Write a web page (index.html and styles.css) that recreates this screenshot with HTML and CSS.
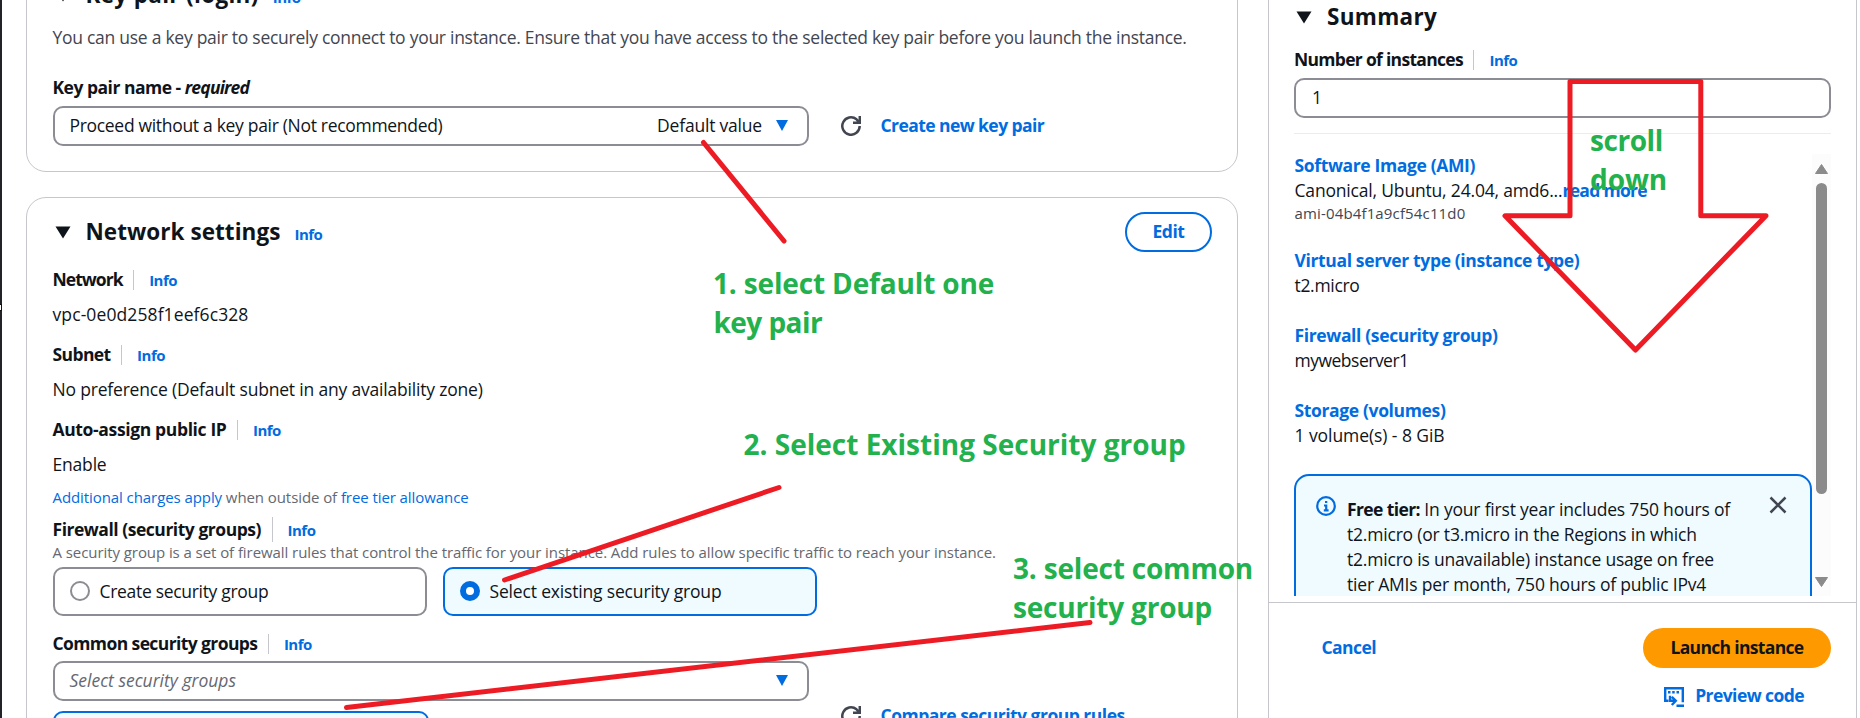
FILE: index.html
```html
<!DOCTYPE html>
<html lang="en">
<head>
<meta charset="utf-8">
<title>Launch an instance</title>
<link rel="stylesheet" href="styles.css">
</head>
<body>
<div class="page">
  <div class="rail"><span class="rail-handle"></span></div>

  <main class="main">
    <section class="card card-key">
      <div class="card-head"><svg class="tri" viewBox="0 0 16 13"><path d="M.5.5h15L8 12.500z"/></svg><h2 class="w-key">Key pair (login)</h2><a class="info">Info</a></div>
      <p class="desc">You can use a key pair to securely connect to your instance. Ensure that you have access to the selected key pair before you launch the instance.</p>
      <div class="label key-label"><span>Key pair name -&nbsp;</span><em>required</em></div>
      <div class="field-row">
        <div class="select"><span class="w-select">Proceed without a key pair (Not recommended)</span><span class="select-meta">Default value</span><svg class="caret" viewBox="0 0 12 11"><path d="M0 0h12L6 11z"/></svg></div>
        <svg class="refresh" viewBox="0 0 20 20"><path d="M18.700 10A8.700 8.700 0 1 1 15.500 3.300L18 6.300M18.800 0v6.800h-6.800"/></svg>
        <a class="link-bold">Create new key pair</a>
      </div>
    </section>

    <section class="card card-net">
      <div class="card-head net-head"><svg class="tri" viewBox="0 0 16 13"><path d="M.5.5h15L8 12.500z"/></svg><h2>Network settings</h2><a class="info">Info</a><button class="btn-edit">Edit</button></div>

      <div class="label"><span class="w-network">Network</span><i class="bar"></i><a class="info">Info</a></div>
      <p class="value w-id">vpc-0e0d258f1eef6c328</p>
      <div class="label"><span>Subnet</span><i class="bar"></i><a class="info">Info</a></div>
      <p class="value">No preference (Default subnet in any availability zone)</p>
      <div class="label"><span class="w-loose">Auto-assign public IP</span><i class="bar"></i><a class="info">Info</a></div>
      <p class="value last">Enable</p>
      <p class="hint charges"><a>Additional charges apply</a> when outside of <a>free tier allowance</a></p>

      <div class="label firewall"><span class="w-firewall">Firewall (security groups)</span><i class="bar tall"></i><a class="info">Info</a></div>
      <p class="hint w-hint">A security group is a set of firewall rules that control the traffic for your instance. Add rules to allow specific traffic to reach your instance.</p>
      <div class="tiles">
        <div class="tile"><span class="radio"></span><span class="w-select">Create security group</span></div>
        <div class="tile on"><span class="radio"></span><span>Select existing security group</span></div>
      </div>

      <div class="label common"><span class="w-tight">Common security groups</span><i class="bar"></i><a class="info">Info</a></div>
      <div class="field-row groups">
        <div class="group-col">
          <div class="select"><em class="placeholder">Select security groups</em><svg class="caret" viewBox="0 0 12 11"><path d="M0 0h12L6 11z"/></svg></div>
          <div class="token"></div>
        </div>
        <div class="compare">
          <svg class="refresh" viewBox="0 0 20 20"><path d="M18.700 10A8.700 8.700 0 1 1 15.500 3.300L18 6.300M18.800 0v6.800h-6.800"/></svg>
          <a class="link-bold w-compare">Compare security group rules</a>
        </div>
      </div>
    </section>
  </main>

  <aside class="summary">
    <div class="summary-body">
      <div class="card-head sum-head"><svg class="tri" viewBox="0 0 16 13"><path d="M.5.5h15L8 12.500z"/></svg><h2 class="w-summary">Summary</h2></div>
      <div class="label"><span class="w-number">Number of instances</span><i class="bar"></i><a class="info">Info</a></div>
      <div class="input">1</div>
      <hr class="rule">
      <div class="scroller">
        <div class="scroll-content">
          <dl>
            <dt class="w-loose">Software Image (AMI)</dt>
            <dd>Canonical, Ubuntu, 24.04, amd6...<b class="more">read more</b></dd>
            <dd class="ami">ami-04b4f1a9cf54c11d0</dd>
            <dt class="w-loose">Virtual server type (instance type)</dt>
            <dd class="w-select">t2.micro</dd>
            <dt class="w-loose">Firewall (security group)</dt>
            <dd class="w-mono">mywebserver1</dd>
            <dt class="w-loose">Storage (volumes)</dt>
            <dd class="w-vol">1 volume(s) - 8 GiB</dd>
          </dl>
          <div class="alert">
            <svg class="alert-icon" viewBox="0 0 20 20"><circle cx="10" cy="10" r="8.800"/><path d="M9 6h2.300M8 9.500h2.200v5M7.800 14.300h4.800"/></svg>
            <p><b>Free tier:</b> In your first year includes 750 hours of<br>t2.micro (or t3.micro in the Regions in which<br>t2.micro is unavailable) instance usage on free<br>tier AMIs per month, 750 hours of public IPv4</p>
            <svg class="close" viewBox="0 0 18 18"><path d="M1.500 1.500l15 15M16.500 1.500l-15 15"/></svg>
          </div>
        </div>
        <div class="track">
          <svg viewBox="0 0 13 10"><path d="M6.500.5L12.500 9.500H.5z"/></svg>
          <span class="thumb"></span>
          <svg class="down" viewBox="0 0 13 10"><path d="M6.500 9.500L12.500.5H.5z"/></svg>
        </div>
      </div>
    </div>
    <footer class="actions">
      <div class="action-row"><a class="link-bold cancel">Cancel</a><button class="btn-launch">Launch instance</button></div>
      <div class="preview">
        <svg viewBox="0 0 20 20"><path d="M4.500 13.700H1.200V1.200h17.600v14"/><path d="M4 5.200h2.500M8.200 5.200h2.500M12.500 5.200h2.500"/><path d="M6 8.800v4.900h5M7.800 9.800l4 3.900-4 4.300M12.500 18.800H20"/></svg>
        <a class="link-bold">Preview code</a>
      </div>
    </footer>
  </aside>

  <svg class="notes" viewBox="0 0 1860 718">
    <g class="strokes">
      <path d="M703.500 142.500L784 241"/>
      <path d="M504.500 580L779 487.500"/>
      <path d="M346.500 707.500L1090 622.500"/>
      <path class="arrow" d="M1570 81.500H1700.800V215.700H1766L1635.500 350 1505 215.700H1570z"/>
    </g>
    <g class="captions">
      <text x="713" y="294" textLength="281">1. select Default one</text>
      <text x="713.500" y="333" textLength="109">key pair</text>
      <text x="743.500" y="455" textLength="442">2. Select Existing Security group</text>
      <text x="1013" y="579" textLength="240">3. select common</text>
      <text x="1013" y="618" textLength="199">security group</text>
      <text x="1590" y="151" textLength="73">scroll</text>
      <text x="1590" y="190" textLength="77">down</text>
    </g>
  </svg>
</div>
</body>
</html>
```
FILE: styles.css
```css
* { box-sizing: border-box; }
body {
  margin: 0;
  height: 718px;
  overflow: hidden;
  background: #fff;
  color: #0f141a;
  font: 17.5px/25px "Open Sans", "Noto Sans", sans-serif;
  letter-spacing: -0.23px;
}
h2, p, dl, dd { margin: 0; }
a { color: #006ce0; }
.page { position: relative; display: flex; height: 718px; overflow: hidden; }

.rail { width: 2px; flex: none; background: #222327; padding-top: 304px; }
.rail-handle { display: block; height: 7px; background: #fff; border: 1px solid #111; border-left: 0; }

/* left column */
.main { width: 1212px; margin-left: 24px; flex: none; }
.card { border: 1px solid #c6c6cd; border-radius: 20px; padding: 0 25px 0 25.500px; background: #fff; }
.card-key { margin-top: -45px; padding-top: 24px; padding-bottom: 25px; }
.card-net { margin-top: 25px; padding-top: 14px; height: 640px; }
.card-head { display: flex; align-items: center; height: 30px; }
.net-head { height: 40px; margin-bottom: 15px; }
h2 { font-size: 22.5px; line-height: 30px; font-weight: 700; letter-spacing: 0.05px; }
.tri { width: 16px; height: 13px; margin: 0 15px 0 2px; fill: #0f141a; }
.info { font-size: 15px; line-height: 25px; font-weight: 700; letter-spacing: -0.5px; }
.card-head .info { margin-left: 14px; padding-top: 5px; }
.desc { margin-top: 15px; color: #424650; letter-spacing: -0.27px; }
.label { display: flex; align-items: center; height: 25px; font-weight: 700; letter-spacing: -0.6px; }
.label .info { padding-top: 1px; }
.key-label { margin-top: 25px; margin-bottom: 6px; letter-spacing: -0.5px; }
.key-label em { letter-spacing: -0.8px; }
.bar { width: 1px; height: 20px; background: #c6c6cd; margin: 0 15px 0 10.500px; }
.bar.tall { height: 25px; }
.field-row { display: flex; align-items: center; }
.select {
  display: flex; align-items: center; width: 756px; height: 40px; flex: none;
  border: 2px solid #8c8c94; border-radius: 10px; padding: 0 18.500px 1px 15px; background: #fff;
}
.select-meta { margin-left: auto; letter-spacing: -0.2px; }
.caret { width: 12px; height: 11px; margin-left: 14px; fill: #006ce0; }
.placeholder { margin-right: auto; color: #656871; letter-spacing: 0; }
.refresh { width: 20px; height: 20px; margin: 0 20px 0 32px; fill: none; stroke: #424650; stroke-width: 2.500; flex: none; }
.link-bold { font-weight: 700; letter-spacing: -0.57px; white-space: nowrap; }
.field-row > .link-bold { padding-bottom: 1px; }
.btn-edit {
  margin-left: auto; width: 87px; height: 40px; border: 2px solid #006ce0; border-radius: 20px;
  background: #fff; color: #006ce0; font: inherit; font-weight: 700; letter-spacing: -0.45px; padding: 0 0 1px;
}
.value { margin: 10px 0 15px; letter-spacing: -0.19px; }
.value.last { margin-bottom: 10px; }
.hint { font-size: 15px; line-height: 20px; letter-spacing: -0.08px; color: #656871; white-space: nowrap; }
.firewall { margin-top: 10px; }
.tiles { display: flex; gap: 15.500px; margin-top: 5px; }
.tile {
  display: flex; align-items: center; width: 374.500px; height: 49px; padding: 0 15px 1px;
  border: 2px solid #8c8c94; border-radius: 10px; gap: 10px; letter-spacing: -0.17px;
}
.tile.on { border-color: #006ce0; background: #f0fbff; }
.radio { width: 20px; height: 20px; border: 2px solid #8c8c94; border-radius: 50%; background: #fff; }
.on .radio { border: 6px solid #006ce0; }
.common { margin-top: 15px; margin-bottom: 5px; }
.groups { align-items: flex-start; }
.token { width: 376.500px; height: 60px; margin-top: 10px; border: 2px solid #006ce0; border-radius: 10px; background: #f0fbff; }
.compare { display: flex; align-items: center; padding-top: 42px; }

/* right column */
.summary { width: 589px; margin-left: 30px; flex: none; border: solid #c6c6cd; border-width: 0 1px; }
.summary-body { height: 602px; padding: 2px 25px 0; }
.sum-head { margin-bottom: 15px; }
.input { height: 40px; margin-top: 6px; border: 2px solid #8c8c94; border-radius: 10px; padding: 5px 16px; }
.rule { height: 1px; border: 0; margin: 15px 0 19px; background: #ebebf0; }
.scroller { display: flex; height: 443px; overflow: hidden; }
.scroll-content { width: 518px; flex: none; }
dl { padding-left: 0.5px; }
dt { color: #006ce0; font-weight: 700; letter-spacing: -0.38px; }
dd + dt { margin-top: 25px; }
dd { letter-spacing: -0.18px; }
.more { color: #006ce0; letter-spacing: -0.7px; }
dd.ami { font-size: 15px; line-height: 20px; color: #424650; letter-spacing: 0.15px; }
.alert {
  display: flex; height: 200px; margin-top: 26px; padding: 20px 23px 0 20px;
  border: 2px solid #006ce0; border-radius: 15px; background: #f0fbff;
}
.alert-icon { width: 20px; height: 20px; flex: none; fill: none; stroke: #006ce0; stroke-width: 2.200; }
.alert p { margin: 1px 0 0 11px; white-space: nowrap; letter-spacing: -0.2px; }
.alert b { letter-spacing: -0.6px; }
.close { width: 18px; height: 18px; margin: 0 0 0 auto; fill: none; stroke: #424650; stroke-width: 2.500; }
.track { width: 19px; display: flex; flex-direction: column; align-items: center; background: #fcfcfc; margin-top: 1px; padding: 10px 0 9px; }
.track svg { width: 13px; height: 10px; fill: #8b8b8b; stroke: #8b8b8b; stroke-linejoin: round; }
.thumb { width: 11px; height: 311px; margin-top: 9px; border-radius: 6px; background: #8b8b8b; }
.track .down { margin-top: auto; }
.actions { border-top: 1px solid #c6c6cd; padding: 25px 25px 0; }
.action-row { display: flex; align-items: center; justify-content: space-between; }
.cancel { margin-left: 27.500px; padding-bottom: 1px; }
.btn-launch {
  width: 188px; height: 40px; border: 0; border-radius: 20px; background: #f90; color: #0f141a;
  font: inherit; font-weight: 700; letter-spacing: -0.67px; padding: 0 0 1px;
}
.preview { display: flex; align-items: center; justify-content: flex-end; margin-top: 15px; padding-right: 27px; gap: 11px; }
.preview svg { width: 20px; height: 20px; margin-top: 3px; fill: none; stroke: #006ce0; stroke-width: 2.400; }

/* tracking per text run */
.w-key { letter-spacing: 0.32px; }
.w-hint { letter-spacing: -0.07px; }
.w-firewall { letter-spacing: -0.47px; }
.w-compare { letter-spacing: -0.5px; }
.w-select { letter-spacing: -0.31px; }
.w-network { letter-spacing: -0.95px; }
.w-loose { letter-spacing: -0.36px; }
.w-tight { letter-spacing: -0.6px; }
.w-number { letter-spacing: -0.7px; }
.w-summary { letter-spacing: 0.3px; }
.w-mono { letter-spacing: -0.5px; }
.w-vol { letter-spacing: -0.07px; }
.w-id { letter-spacing: 0.1px; }

/* drawn annotations above the page */
.notes { position: absolute; left: 0; top: 0; width: 1860px; height: 718px; pointer-events: none; }
.strokes { fill: none; stroke: #ed1c24; stroke-width: 5; stroke-linecap: round; stroke-linejoin: round; }
.captions { fill: #22b14c; font-size: 28px; font-weight: 700; }
```
